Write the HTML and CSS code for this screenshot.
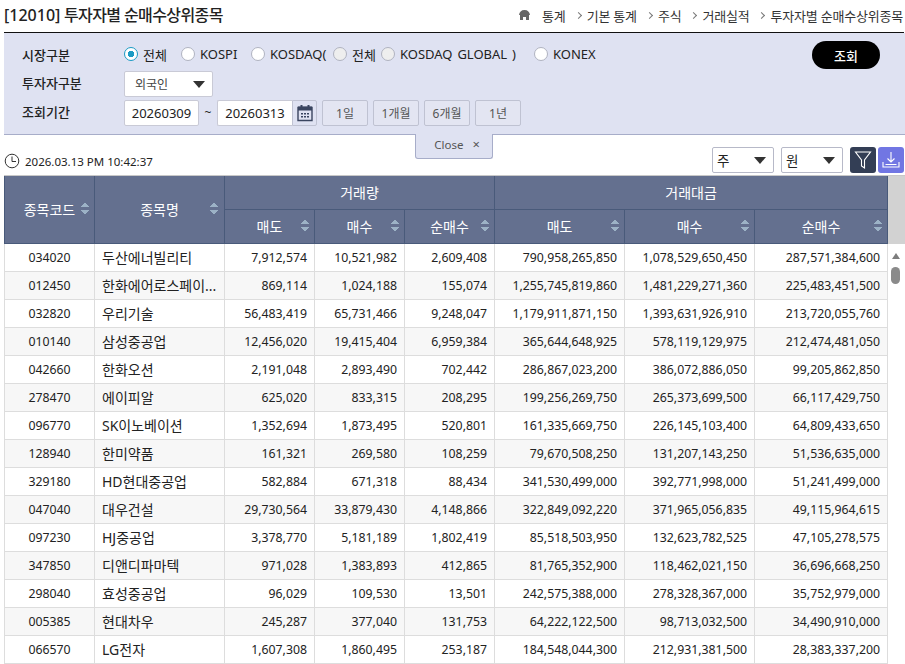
FILE: index.html
```html
<!DOCTYPE html>
<html lang="ko">
<head>
<meta charset="utf-8">
<title>투자자별 순매수상위종목</title>
<link rel="stylesheet" href="styles.css">
</head>
<body>
<div class="page">
  <header class="title-bar">
    <h1 class="title"><span class="title-code">[12010]</span> 투자자별 순매수상위종목</h1>
    <nav class="crumbs">
      <svg class="home" width="13" height="12" viewBox="0 0 13 12"><path d="M6.500 1C3.200 1 1.400 3 1 6h1v5h3V8h3v3h3V6h1C11.600 3 9.800 1 6.500 1z" fill="#666"/></svg>
      <span class="crumb-first">통계</span><i class="sep"></i><span>기본 통계</span><i class="sep"></i><span>주식</span><i class="sep"></i><span>거래실적</span><i class="sep"></i><span>투자자별 순매수상위종목</span>
    </nav>
  </header>
  <section class="search">
    <div class="row row-market">
      <label class="lbl">시장구분</label>
      <div class="radios">
        <span class="radio on w1"><i></i>전체</span>
        <span class="radio w2"><i></i>KOSPI</span>
        <span class="radio w3"><i></i>KOSDAQ(</span>
        <span class="radio dim w4"><i></i>전체</span>
        <span class="radio dim w5"><i></i>KOSDAQ GLOBAL )</span>
        <span class="radio"><i></i>KONEX</span>
      </div>
      <button class="go">조회</button>
    </div>
    <div class="row">
      <label class="lbl">투자자구분</label>
      <div class="select investor">외국인<b class="caret"></b></div>
    </div>
    <div class="row">
      <label class="lbl">조회기간</label>
      <div class="date">20260309</div>
      <span class="tilde">~</span>
      <div class="date date2">20260313</div>
      <div class="cal"><svg width="16" height="18" viewBox="0 0 16 18"><path d="M1 3.500h14v13H1z" fill="none" stroke="#3a4560" stroke-width="1.400"/><path d="M1 2.500h14v4H1zM3.500 1h2v3h-2zM10.500 1h2v3h-2z" fill="#3a4560"/><path d="M4 9h2v1.500H4zM7 9h2v1.500H7zM10 9h2v1.500h-2zM4 12h2v1.500H4zM7 12h2v1.500H7zM10 12h2v1.500h-2z" fill="#3a4560"/></svg></div>
      <button class="per w-a">1일</button>
      <button class="per w-b">1개월</button>
      <button class="per w-b">6개월</button>
      <button class="per w-b">1년</button>
    </div>
  </section>
  <div class="close-tab">Close<span class="x">×</span></div>
  <div class="tools">
    <svg class="clock" width="16" height="16" viewBox="0 0 16 16"><circle cx="8" cy="8" r="6.800" fill="none" stroke="#333" stroke-width="1"/><path d="M8 3.500V8.500h4" fill="none" stroke="#333"/></svg>
    <span class="time">2026.03.13 PM 10:42:37</span>
    <div class="select unit">주<b class="caret"></b></div>
    <div class="select unit u2">원<b class="caret"></b></div>
    <span class="ib dark"><svg width="18" height="20" viewBox="0 0 18 20"><path d="M1.500 2h15L10.500 10v8L7.500 16v-6z" fill="none" stroke="#fff" stroke-width="1.100"/></svg></span>
    <span class="ib violet"><svg width="20" height="20" viewBox="0 0 20 20"><path d="M10 2v10M6.500 8.500L10 12l3.500-3.500M2 12v5h16v-5" fill="none" stroke="#fff" stroke-width="1.100"/><path d="M4.500 14.500h11" stroke="#fff"/></svg></span>
  </div>
  <div class="grid-wrap">
    <table class="grid">
      <colgroup><col class="c1"><col class="c2"><col class="c3"><col class="c3"><col class="c3"><col class="c4"><col class="c4"><col class="c5"></colgroup>
      <thead>
        <tr class="h1">
          <th rowspan="2"><span class="code-h">종목코드</span><i class="sort s1"></i></th>
          <th rowspan="2">종목명<i class="sort"></i></th>
          <th colspan="3">거래량</th>
          <th colspan="3">거래대금</th>
        </tr>
        <tr class="h2">
          <th>매도<i class="sort"></i></th><th>매수<i class="sort"></i></th><th>순매수<i class="sort"></i></th>
          <th>매도<i class="sort"></i></th><th>매수<i class="sort"></i></th><th>순매수<i class="sort"></i></th>
        </tr>
      </thead>
      <tbody>
        <tr><td>034020</td><td>두산에너빌리티</td><td>7,912,574</td><td>10,521,982</td><td>2,609,408</td><td>790,958,265,850</td><td>1,078,529,650,450</td><td>287,571,384,600</td></tr>
        <tr><td>012450</td><td>한화에어로스페이...</td><td>869,114</td><td>1,024,188</td><td>155,074</td><td>1,255,745,819,860</td><td>1,481,229,271,360</td><td>225,483,451,500</td></tr>
        <tr><td>032820</td><td>우리기술</td><td>56,483,419</td><td>65,731,466</td><td>9,248,047</td><td>1,179,911,871,150</td><td>1,393,631,926,910</td><td>213,720,055,760</td></tr>
        <tr><td>010140</td><td>삼성중공업</td><td>12,456,020</td><td>19,415,404</td><td>6,959,384</td><td>365,644,648,925</td><td>578,119,129,975</td><td>212,474,481,050</td></tr>
        <tr><td>042660</td><td>한화오션</td><td>2,191,048</td><td>2,893,490</td><td>702,442</td><td>286,867,023,200</td><td>386,072,886,050</td><td>99,205,862,850</td></tr>
        <tr><td>278470</td><td>에이피알</td><td>625,020</td><td>833,315</td><td>208,295</td><td>199,256,269,750</td><td>265,373,699,500</td><td>66,117,429,750</td></tr>
        <tr><td>096770</td><td>SK이노베이션</td><td>1,352,694</td><td>1,873,495</td><td>520,801</td><td>161,335,669,750</td><td>226,145,103,400</td><td>64,809,433,650</td></tr>
        <tr><td>128940</td><td>한미약품</td><td>161,321</td><td>269,580</td><td>108,259</td><td>79,670,508,250</td><td>131,207,143,250</td><td>51,536,635,000</td></tr>
        <tr><td>329180</td><td>HD현대중공업</td><td>582,884</td><td>671,318</td><td>88,434</td><td>341,530,499,000</td><td>392,771,998,000</td><td>51,241,499,000</td></tr>
        <tr><td>047040</td><td>대우건설</td><td>29,730,564</td><td>33,879,430</td><td>4,148,866</td><td>322,849,092,220</td><td>371,965,056,835</td><td>49,115,964,615</td></tr>
        <tr><td>097230</td><td>HJ중공업</td><td>3,378,770</td><td>5,181,189</td><td>1,802,419</td><td>85,518,503,950</td><td>132,623,782,525</td><td>47,105,278,575</td></tr>
        <tr><td>347850</td><td>디앤디파마텍</td><td>971,028</td><td>1,383,893</td><td>412,865</td><td>81,765,352,900</td><td>118,462,021,150</td><td>36,696,668,250</td></tr>
        <tr><td>298040</td><td>효성중공업</td><td>96,029</td><td>109,530</td><td>13,501</td><td>242,575,388,000</td><td>278,328,367,000</td><td>35,752,979,000</td></tr>
        <tr><td>005385</td><td>현대차우</td><td>245,287</td><td>377,040</td><td>131,753</td><td>64,222,122,500</td><td>98,713,032,500</td><td>34,490,910,000</td></tr>
        <tr><td>066570</td><td>LG전자</td><td>1,607,308</td><td>1,860,495</td><td>253,187</td><td>184,548,044,300</td><td>212,931,381,500</td><td>28,383,337,200</td></tr>
      </tbody>
    </table>
    <aside class="scroll">
      <div class="scroll-head"></div>
      <b class="up"></b>
      <div class="thumb"></div>
    </aside>
  </div>
</div>
</body>
</html>
```
FILE: styles.css
```css
* { box-sizing: border-box; }
html, body { margin: 0; padding: 0; height: 100%; overflow: hidden; background: #fff; }
body { font-family: "Noto Sans", "Noto Sans CJK KR", sans-serif; color: #222; font-size: 13px; }
.page { position: relative; width: 905px; height: 664px; overflow: hidden; }

.title-bar { height: 33px; margin-left: 4px; margin-right: 1px; border-bottom: 1px solid #111; display: flex; justify-content: space-between; align-items: center; padding-bottom: 2px; }
.title { margin: 0; font-size: 16px; font-weight: 500; color: #222; letter-spacing: -0.6px; line-height: 30px; }
.title-code { letter-spacing: 0; }
.crumbs { display: flex; align-items: center; font-size: 13px; color: #333; white-space: nowrap; letter-spacing: -0.2px; margin-right: 1px; }
.home { margin-right: 11px; }
.sep { width: 5px; height: 5px; border-top: 1px solid #777; border-right: 1px solid #777; transform: rotate(45deg); margin: 0 6px 0 10px; }

.search { height: 102px; margin-left: 4px; background: #dfe2f2; border-bottom: 1px solid #a7adc9; padding: 8px 24px 0 18px; }
.row { display: flex; align-items: center; height: 29px; }
.row-market { height: 28px; }
.lbl { width: 102px; font-weight: 500; font-size: 13px; color: #222; padding-bottom: 2px; }
.radios { display: flex; align-items: center; flex: 1; white-space: nowrap; padding-bottom: 2px; }
.radio { display: flex; align-items: center; font-size: 13px; color: #222; }
.radio i { width: 14px; height: 14px; border-radius: 50%; border: 1px solid #b0b3c0; background: #fff; margin-right: 5px; flex: none; }
.radio.dim i { background: #eee; }
.radio.on i { border: 1px solid #1c9bc4; background: radial-gradient(circle, #1c9bc4 0 3px, #fff 3.5px); }
.w1 { width: 57px; } .w2 { width: 70px; } .w3 { width: 82px; } .w4 { width: 48px; } .w5 { width: 153px; word-spacing: 1.5px; }
.go { width: 68px; height: 28px; margin-right: 1px; border: 0; border-radius: 14px; background: #000; color: #fff; font: 500 13px "Noto Sans", "Noto Sans CJK KR", sans-serif; }
.select { position: relative; background: #fff; border: 1px solid #c9cad6; border-radius: 2px; font-size: 12px; display: flex; align-items: center; }
.investor { width: 89px; height: 26px; padding-left: 10px; color: #444; }
.caret { position: absolute; right: 7px; top: 9px; border-left: 6px solid transparent; border-right: 6px solid transparent; border-top: 7px solid #333; }
.date { width: 75px; height: 26px; background: #fff; border: 1px solid #c9cad6; border-radius: 2px; text-align: center; line-height: 24px; font-size: 13px; }
.date2 { border-radius: 2px 0 0 2px; border-right: 0; }
.tilde { width: 18px; text-align: center; font-size: 12px; }
.cal { width: 25px; height: 26px; border: 1px solid #c0c3d3; border-radius: 0 2px 2px 0; display: flex; align-items: center; justify-content: center; margin-right: 5px; }
.per { height: 26px; border: 1px solid #bfc2d2; border-radius: 2px; background: #e3e5f2; color: #555; font: 12px "Noto Sans", "Noto Sans CJK KR", sans-serif; padding: 0; margin-right: 5px; }
.w-a { width: 46px; } .w-b { width: 46px; }

.close-tab { position: absolute; left: 415px; top: 134px; width: 78px; height: 25px; padding-left: 6px; background: #dfe2f2; border: 1px solid #a7adc9; border-top: 0; border-radius: 0 0 3px 3px; font-size: 11.5px; color: #555; text-align: center; line-height: 21px; }
.x { margin-left: 9px; font-size: 13px; }

.tools { height: 40px; display: flex; align-items: center; padding-left: 4px; padding-top: 9px; }
.clock { margin-right: 5px; margin-top: 3px; }
.time { font-size: 11.5px; color: #222; width: 687px; margin-top: 3px; }
.unit { width: 62px; height: 26px; padding-left: 4px; font-size: 13.5px; border-color: #b7b9c8; margin-right: 7px; }
.u2 { margin-right: 7px; }
.ib { width: 26px; height: 26px; border-radius: 3px; display: flex; align-items: center; justify-content: center; margin-right: 2px; }
.dark { background: #333e55; }
.violet { background: #7176e3; margin-right: 0; }

.grid-wrap { display: flex; margin-left: 4px; border-top: 1px solid #c8c8c8; }
.grid { width: 883px; table-layout: fixed; border-collapse: collapse; flex: none; }
.c1 { width: 90px; } .c2 { width: 130px; } .c3 { width: 90px; } .c4 { width: 130px; } .c5 { width: 133px; }
.grid th { position: relative; background: #64708f; color: #fff; font-weight: 400; font-size: 14px; border: 1px solid #495a7a; border-top: 0; text-align: center; padding: 0; }
.h1 th { height: 33px; }
.h2 th { height: 34px; }
.sort { position: absolute; right: 3px; top: 50%; margin-top: -7px; width: 8px; height: 14px; background:
  linear-gradient(to bottom right, transparent 50%, #9cb2c6 50%) 0 0 / 4px 5px no-repeat,
  linear-gradient(to bottom left, transparent 50%, #9cb2c6 50%) 4px 0 / 4px 5px no-repeat,
  linear-gradient(to top right, transparent 50%, #9cb2c6 50%) 0 8px / 4px 5px no-repeat,
  linear-gradient(to top left, transparent 50%, #9cb2c6 50%) 4px 8px / 4px 5px no-repeat; }
.h2 .sort { right: 5px; }
.h1 th .sort { right: 6px; }
.h1 th .s1 { right: 5px; }
.code-h { margin-right: 0; }
.grid td { height: 28px; padding: 0 7px 0 9px; border: 1px solid #ddd; border-top: 0; font-size: 12.3px; color: #222; text-align: right; white-space: nowrap; overflow: hidden; }
.grid td:first-child { text-align: center; border-left: 1px solid #ddd; padding: 0; }
.grid td:nth-child(2) { text-align: left; padding-left: 7px; padding-right: 0; font-size: 14px; }
.grid tbody tr:nth-child(even) td { background: #f7f7f7; }

.scroll { width: 17px; flex: none; display: flex; flex-direction: column; align-items: center; padding-right: 2px; }
.scroll-head { width: 17px; height: 68px; background: #d2d2d2; flex: none; margin-right: -2px; }
.up { margin-top: 9px; border-left: 4.500px solid transparent; border-right: 4.500px solid transparent; border-bottom: 6px solid #7d7d7d; }
.thumb { margin-top: 8px; width: 9px; height: 17px; background: #8a8a8a; border-radius: 5px; }
```
